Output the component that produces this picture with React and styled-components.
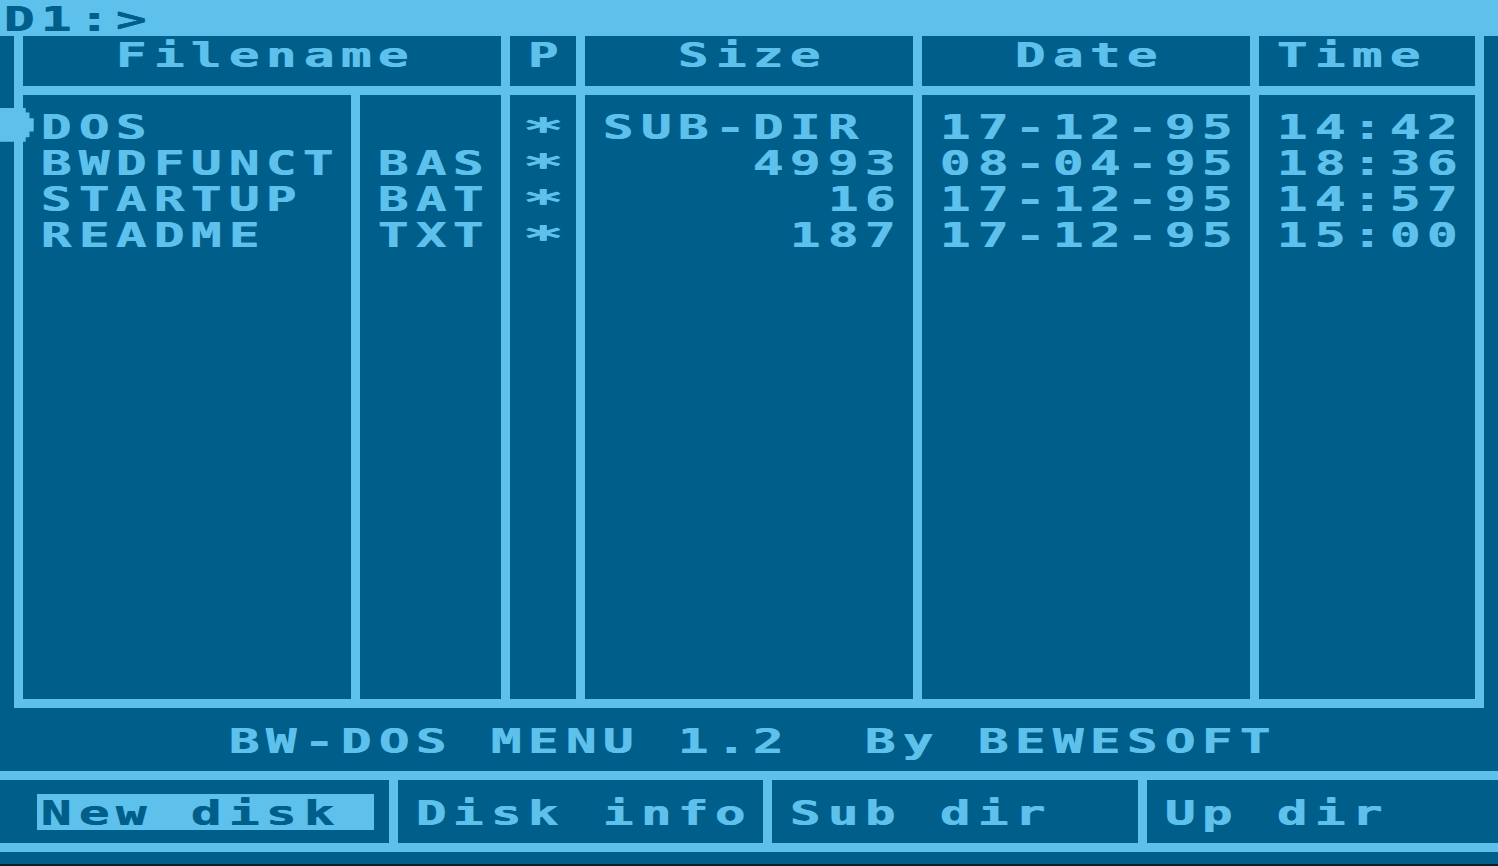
import React from "react";
import styled, { createGlobalStyle } from "styled-components";

// the screen is an Atari text mode: 40 x 24 cells of 8 x 8 pixels
const P = 1498 / 320; // one pixel across
const L = 866 / 192; // one scan line
const C = P * 8; // cell width
const R = L * 8; // cell height

const LIGHT = "#5dc1ec";
const DARK = "#005e8b";

const GlobalStyle = createGlobalStyle`
  html, body {
    margin: 0;
    padding: 0;
    background: ${DARK};
  }
  body {
    font-family: "DejaVu Sans Mono", "Liberation Mono", monospace;
  }
`;

const Screen = styled.div`
  position: relative;
  width: 1498px;
  height: 866px;
  overflow: hidden;
  background: ${DARK};
  color: ${LIGHT};
  display: flex;
  flex-direction: column;
`;

const TextLine = styled.div`
  display: flex;
  height: ${R}px;
  justify-content: ${(p) => p.$align || "flex-start"};
`;

const Glyph = styled.span`
  display: inline-block;
  flex: none;
  width: ${C}px;
  height: 35px;
  text-align: center;
  font-size: 30px;
  font-weight: bold;
  line-height: 35px;
  white-space: pre;
  text-shadow: 0.6px 0 currentColor;
  transform-origin: center top;
  transform: ${(p) => (p.$star ? "translateY(3px) scale(2.3, 1.12)" : "scale(1.69, 1.1)")};
`;

const Inverse = styled.span`
  display: flex;
  background: ${LIGHT};
  color: ${DARK};
`;

const PromptBar = styled.div`
  flex: none;
  height: ${R}px;
  background: ${LIGHT};
  color: ${DARK};
`;

const Table = styled.div`
  flex: none;
  box-sizing: border-box;
  margin-left: ${3 * P}px;
  width: ${314 * P}px;
  display: grid;
  grid-template-columns: ${70 * P}px ${30 * P}px ${14 * P}px ${70 * P}px ${70 * P}px ${46 * P}px;
  grid-template-rows: ${11 * L}px ${134 * L}px;
  column-gap: ${2 * P}px;
  row-gap: ${2 * L}px;
  padding: 0 ${2 * P}px ${2 * L}px;
  background: ${LIGHT};
`;

const HeadCell = styled.div`
  grid-column: span ${(p) => p.$span || 1};
  background: ${DARK};
  padding: 0 ${3 * P}px;
`;

const BodyCell = styled.div`
  background: ${DARK};
  padding: ${3 * L}px ${3 * P}px 0;
  display: flex;
  flex-direction: column;
`;

const Title = styled.div`
  flex: none;
  height: ${14 * L}px;
  box-sizing: border-box;
  padding-top: ${3 * L}px;
`;

const Menu = styled.div`
  flex: none;
  display: grid;
  grid-template-columns: ${83 * P}px ${78 * P}px ${78 * P}px 1fr;
  column-gap: ${2 * P}px;
  padding: ${2 * L}px 0;
  height: ${18 * L}px;
  box-sizing: border-box;
  background: ${LIGHT};
`;

const MenuCell = styled.div`
  background: ${DARK};
  padding: ${3 * L}px 0 0 ${(p) => p.$indent}px;
`;

const Footer = styled.div`
  flex: 1;
  border-bottom: 2px solid #0b1c26;
`;

const Cursor = styled.svg`
  position: absolute;
  left: 0;
  top: ${3 * R}px;
  width: ${C}px;
  height: ${R}px;
`;

function Chars({ text }) {
  return [...text].map((ch, i) => (
    <Glyph key={i} $star={ch === "*"}>
      {ch}
    </Glyph>
  ));
}

function Line({ text, align }) {
  return (
    <TextLine $align={align}>
      <Chars text={text} />
    </TextLine>
  );
}

const files = [
  { name: "DOS", ext: "", size: "SUB-DIR", date: "17-12-95", time: "14:42" },
  { name: "BWDFUNCT", ext: "BAS", size: "4993", date: "08-04-95", time: "18:36" },
  { name: "STARTUP", ext: "BAT", size: "16", date: "17-12-95", time: "14:57" },
  { name: "README", ext: "TXT", size: "187", date: "17-12-95", time: "15:00" },
];

const menu = [
  { label: "New disk ", active: true },
  { label: "Disk info" },
  { label: "Sub dir" },
  { label: "Up dir" },
];

export default function App() {
  return (
    <>
      <GlobalStyle />
      <Screen>
        <PromptBar>
          <Line text="D1:>" />
        </PromptBar>

        <Table>
          <HeadCell $span={2}>
            <Line text="Filename" align="center" />
          </HeadCell>
          <HeadCell>
            <Line text="P" align="center" />
          </HeadCell>
          <HeadCell>
            <Line text="Size" align="center" />
          </HeadCell>
          <HeadCell>
            <Line text="Date" align="center" />
          </HeadCell>
          <HeadCell>
            <Line text="Time" />
          </HeadCell>

          <BodyCell>
            {files.map((f) => (
              <Line key={f.name} text={f.name} />
            ))}
          </BodyCell>
          <BodyCell>
            {files.map((f) => (
              <Line key={f.name} text={f.ext} />
            ))}
          </BodyCell>
          <BodyCell>
            {files.map((f) => (
              <Line key={f.name} text="*" />
            ))}
          </BodyCell>
          <BodyCell>
            {files.map((f) => (
              <Line key={f.name} text={f.size} align={f.ext ? "flex-end" : "flex-start"} />
            ))}
          </BodyCell>
          <BodyCell>
            {files.map((f) => (
              <Line key={f.name} text={f.date} />
            ))}
          </BodyCell>
          <BodyCell>
            {files.map((f) => (
              <Line key={f.name} text={f.time} />
            ))}
          </BodyCell>
        </Table>

        <Title>
          <Line text="BW-DOS MENU 1.2  By BEWESOFT" align="center" />
        </Title>

        <Menu>
          {menu.map((m, i) => (
            <MenuCell key={m.label} $indent={i === 0 ? C : 3 * P}>
              <TextLine>
                {m.active ? (
                  <Inverse>
                    <Chars text={m.label} />
                  </Inverse>
                ) : (
                  <Chars text={m.label} />
                )}
              </TextLine>
            </MenuCell>
          ))}
        </Menu>

        <Footer />

        <Cursor viewBox="0 0 8 8" preserveAspectRatio="none">
          <polygon
            fill={LIGHT}
            points="0,0 5.5,0 5.5,1 6.3,1 6.3,2.3 7.2,2.3 7.2,5.2 6.3,5.2 6.3,6.5 5.5,6.5 5.5,7.5 0,7.5"
          />
        </Cursor>
      </Screen>
    </>
  );
}
